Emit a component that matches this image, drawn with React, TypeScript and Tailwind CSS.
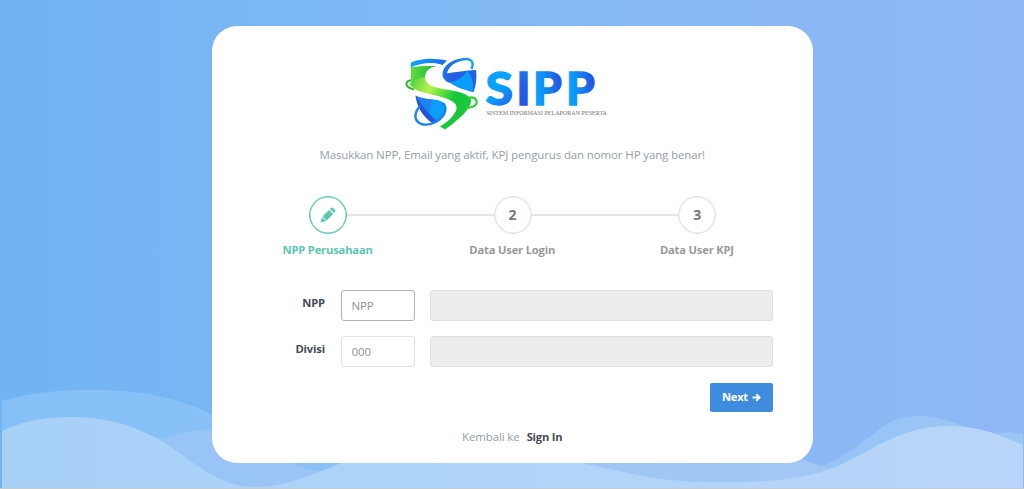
import React from "react";

function Waves() {
  return (
    <svg className="col-start-1 row-start-1 h-[489px] w-[1024px]" viewBox="0 0 1024 489" aria-hidden="true">
      <defs>
        <linearGradient id="front" x1="0" x2="1" y1="0" y2="0">
          <stop offset="0" stopColor="#a8d1f8" />
          <stop offset="0.4" stopColor="#aed3f9" />
          <stop offset="1" stopColor="#b9d5f9" />
        </linearGradient>
        <linearGradient id="middle" x1="0" x2="1" y1="0" y2="0">
          <stop offset="0" stopColor="#97c4f6" />
          <stop offset="1" stopColor="#a3c7f5" />
        </linearGradient>
        <linearGradient id="back" x1="0" x2="1" y1="0" y2="0">
          <stop offset="0" stopColor="#86c0f7" />
          <stop offset="0.3" stopColor="#8ac2f8" />
          <stop offset="1" stopColor="#9cc5f5" />
        </linearGradient>
      </defs>
      <path
        fill="url(#back)"
        d="M2 401 C32 392 62 390 92 390 C140 390 175 397 211 414 C260 438 330 450 420 450 L740 450 C765 463 780 470 801 470 C816 469 826 465 835 460 C860 446 874 433 885 425 C903 414 930 412 962 426 L992 434 C1004 432 1013 432 1023 434 V489 H2 Z"
      />
      <path
        fill="url(#middle)"
        d="M100 489 C120 462 140 445 160 440 Q186 431 211 429 C245 431 265 452 292 463 C307 470 322 474 341 473 L560 455 H790 C808 461 820 466 833 470 L840 489 Z"
      />
      <path
        fill="url(#front)"
        d="M2 431 C24 420 48 417 70 417 C108 417 134 426 160 440 C194 461 216 487 256 487 C285 487 317 473 341 463 L380 448 H535 L583 463 C628 474 667 482 704 482 C748 483 800 482 838 466 C873 450 902 426 948 426 C982 426 1004 437 1023 445 V489 H2 Z"
      />
      <path fill="#c6cbd2" d="M0 488 H1024 V489 H0 Z" />
    </svg>
  );
}

function Logo() {
  return (
    <svg className="mr-[14px] h-[95px] w-[220px] shrink-0" viewBox="395 45 220 95" role="img" aria-label="SIPP">
      <defs>
        <linearGradient id="cyan" x1="0" x2="1" y1="0" y2="0">
          <stop offset="0" stopColor="#0aa6ff" />
          <stop offset="1" stopColor="#1c6ae8" />
        </linearGradient>
        <linearGradient id="ring" x1="0" x2="1" y1="0" y2="0">
          <stop offset="0" stopColor="#1c6ae8" />
          <stop offset="1" stopColor="#14a2fb" />
        </linearGradient>
        <linearGradient id="green" x1="0" x2="1" y1="0" y2="0.6">
          <stop offset="0" stopColor="#22c436" />
          <stop offset="0.4" stopColor="#b6f44c" />
          <stop offset="0.75" stopColor="#12c93b" />
          <stop offset="1" stopColor="#1fc63c" />
        </linearGradient>
        <linearGradient id="leaf" x1="0" x2="1" y1="0" y2="0">
          <stop offset="0" stopColor="#5fdb3c" />
          <stop offset="1" stopColor="#12b83a" />
        </linearGradient>
        <linearGradient id="letterS" x1="0" x2="0.5" y1="0" y2="1">
          <stop offset="0" stopColor="#139bfa" />
          <stop offset="0.6" stopColor="#04a5ff" />
          <stop offset="1" stopColor="#226ce9" />
        </linearGradient>
        <linearGradient id="letterI" x1="0" x2="0" y1="0" y2="1">
          <stop offset="0" stopColor="#1687f3" />
          <stop offset="0.5" stopColor="#235ce5" />
          <stop offset="1" stopColor="#2153dd" />
        </linearGradient>
        <linearGradient id="letterP" x1="0" x2="1" y1="0.2" y2="0">
          <stop offset="0" stopColor="#06a4ff" />
          <stop offset="0.35" stopColor="#118df6" />
          <stop offset="0.85" stopColor="#2556df" />
        </linearGradient>
      </defs>

      <path fill="url(#cyan)" d="M410.500 67.500 L411 62.500 C422 57.500 435 58 447 60.500 L442.500 65 C432 61.500 421 63 410.500 67.500 Z" />

      <path fill="none" stroke="#28b937" strokeWidth="2" d="M412 80 C404.500 81 404 87 414 89.500" />
      <path
        fill="url(#green)"
        d="M411 67.500 C419 66 427 66 437 66 C429 67 425 71.500 425 77 C425 85 434 87.500 446 89.500 C456 91 466 93 470.500 98 C472.500 102 469 110 460 117.500 C455 122 450 126 445 129.500 L440 126.500 C446 123 454 117 456.500 109 C458 102 448 98.500 436 95.500 C424 92.500 413 91 409 83 L411 83.500 Z"
      />
      <path fill="url(#leaf)" d="M411 67.500 C419 66 427 66 437 66 C429 67 425 71.500 425 77 C419 77 415 80 411 84 Z" />
      <path fill="none" stroke="#28cf39" strokeWidth="2.200" d="M469.500 97.500 C478 97 479 105 472 107 C469 108 466 107.500 465 107" />

      <path
        fill="#2360e2"
        d="M444 74 C455 72 466 70.500 476 70 C477 78 476 86 473.500 92 C465 90 456 87 449.500 82.500 C445 80 443 77 444 74 Z"
      />
      <path fill="#0a9dfb" d="M467 70.500 C465 76 458 81 449.500 82.500 C456 87 465 90 473 92 C474 84 472 76 467 70.500 Z" />
      <path
        fill="none"
        stroke="url(#ring)"
        strokeWidth="2.400"
        d="M449 82 C438 75 448 63 460 60 C470 57 475 61 471.500 69"
      />
      <path fill="#1c73ea" d="M442.500 74 C443 66 451 60 461 58.800 C453 63 446 69 447 77 L449 81 C445 80 442.500 78 442.500 74 Z" />

      <path fill="#1e83f0" d="M415.500 95.500 C425 100 438 98.500 445 103.500 C448 109 443 117 435 121.500 C425 115 418 106 415.500 95.500 Z" />
      <path fill="#0aa0fc" d="M433 99.500 C441 100 446 103 445 108 C443 114 439 118 434 120.500 C427 114 430 108 433 99.500 Z" />
      <path fill="#2352dd" d="M415.500 95.500 C420 103 427 112 436 120.500 L433 123.500 C424 118 417 108 415.500 95.500 Z" />
      <path
        fill="none"
        stroke="#1684ef"
        strokeWidth="2.400"
        d="M420 106 C413 114 414.500 121 421 123.800 C430 127 443 120 445.200 111 C446 107 444.500 104.500 442 103.500"
      />

      <g fontFamily="Lato, sans-serif" fontWeight="900" fontSize="46" strokeWidth="1.300">
        <text x="485.500" y="104.500" fill="url(#letterS)" stroke="url(#letterS)" textLength="27.500" lengthAdjust="spacingAndGlyphs">S</text>
        <text x="516.500" y="104.500" fill="url(#letterI)" stroke="url(#letterI)">I</text>
        <text x="533" y="104.500" fill="url(#letterP)" stroke="url(#letterP)">P</text>
        <text x="566" y="104.500" fill="url(#letterP)" stroke="url(#letterP)">P</text>
      </g>
      <text
        x="486.500"
        y="115.300"
        fill="#77706e"
        fontFamily="'Liberation Serif', serif"
        fontSize="6.500"
        textLength="120.500"
        lengthAdjust="spacingAndGlyphs"
      >
        SISTEM INFORMASI PELAPORAN PESERTA
      </text>
    </svg>
  );
}

function Pencil() {
  return (
    <svg className="h-4 w-4" viewBox="0 0 16 16" fill="#5cc5b1" aria-hidden="true">
      <path d="M.6 15.400 L2 9.900 L6.100 14 Z M2.600 9.300 L9 2.900 L13.100 7 L6.700 13.400 Z M9.900 2 L11 .9 Q12 .1 12.900 .9 L15.100 3.100 Q15.900 4 15.100 5 L14 6.100 Z" />
    </svg>
  );
}

function Stepper() {
  const circle = "flex h-[38px] w-[38px] items-center justify-center rounded-full border-[1.5px] bg-white text-[14px] font-bold";
  const line = "h-[2px] flex-1 bg-[#e5e5e5]";
  return (
    <div className="mt-[33px] w-[554px]">
      <div className="mr-[73px] ml-[73.5px] flex items-center">
        <div className={`${circle} border-[#5cc5b1] shadow-[inset_0_0_0_0.5px_#5cc5b1]`}>
          <Pencil />
        </div>
        <div className={line} />
        <div className={`${circle} border-[#e2e2e2] text-[#777] shadow-[inset_0_0_0_0.5px_#e2e2e2]`}>2</div>
        <div className={line} />
        <div className={`${circle} border-[#e2e2e2] text-[#777] shadow-[inset_0_0_0_0.5px_#e2e2e2]`}>3</div>
      </div>
      <div className="mt-[8px] grid grid-cols-3 text-center text-[11.200px] leading-4 font-bold tracking-[-0.18px] text-[#999]">
        <span className="text-[#5cc5b1]">NPP Perusahaan</span>
        <span>Data User Login</span>
        <span>Data User KPJ</span>
      </div>
    </div>
  );
}

function Field({ label, value, active }: { label: string; value: string; active?: boolean }) {
  return (
    <div className="flex h-[31px]">
      <label className="mr-4 w-[75px] pt-[5.5px] text-right text-[11.200px] leading-4 font-bold tracking-[-0.15px] text-[#444b54]">{label}</label>
      <input
        placeholder={value}
        aria-label={label}
        className={`h-[31px] w-[74px] rounded-[3px] border bg-white px-[9.500px] text-[11.500px] font-medium tracking-[-0.13px] placeholder:text-[#919191] ${
          active ? "border-[#b4b4b4]" : "border-[#e3e3e3]"
        }`}
      />
      <div className="ml-[15px] h-[31px] w-[343px] rounded-[3px] border border-[#dedede] bg-[#ededed]" />
    </div>
  );
}

export default function App() {
  return (
    <div className="grid h-[489px] w-[1024px] overflow-hidden bg-linear-to-r from-[#71b4f3] via-[#82b9f5] to-[#90b7f5] font-['Open_Sans',sans-serif]">
      <Waves />
      <main className="z-10 col-start-1 row-start-1 mt-[25.5px] ml-[211.5px] flex h-[437px] w-[601.5px] flex-col items-center rounded-[25px] bg-white pt-[19px]">
        <Logo />
        <p className="mt-[7px] text-[11.500px] leading-4 font-medium tracking-[-0.13px] text-[#949fa7]">
          Masukkan NPP, Email yang aktif, KPJ pengurus dan nomor HP yang benar!
        </p>
        <Stepper />
        <form className="mt-[32px] flex w-[562px] flex-col gap-[15px] self-start pl-[38.5px]">
          <Field label="NPP" value="NPP" active />
          <Field label="Divisi" value="000" />
        </form>
        <div className="mt-[16px] flex w-full justify-end pr-10">
          <button className="flex h-[29px] w-[63px] items-center justify-center gap-[4px] rounded-[2px] bg-[#3f8bdd] text-[11.200px] font-bold tracking-[-0.3px] text-white">
            Next
            <svg className="h-[9px] w-[9px]" viewBox="0 0 9 9" fill="none" stroke="currentColor" strokeWidth="1.800" aria-hidden="true">
              <path d="M0.500 4.500 H7.500 M4.300 1.200 L7.600 4.500 L4.300 7.800" />
            </svg>
          </button>
        </div>
        <p className="mt-[17px] flex gap-[7px] text-[11.500px] leading-4 font-medium tracking-[-0.13px] text-[#949fa7]">
          <span>Kembali ke</span>
          <a className="text-[11.200px] font-bold tracking-[-0.2px] text-[#444b54]">Sign In</a>
        </p>
      </main>
    </div>
  );
}
